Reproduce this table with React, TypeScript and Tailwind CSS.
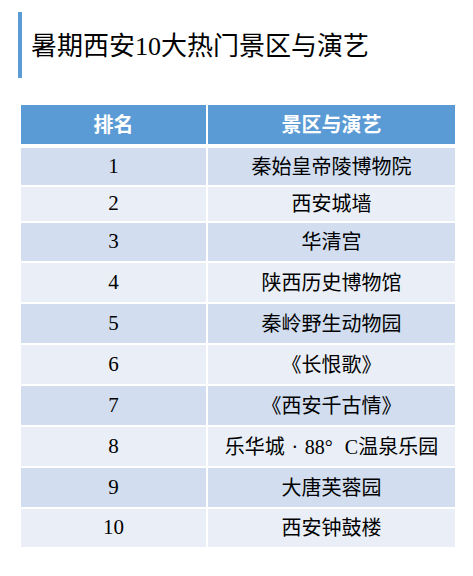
const ROWS: { rank: string; name: React.ReactNode; h: string }[] = [
  { rank: "1", name: "秦始皇帝陵博物院", h: "h-[37px]" },
  { rank: "2", name: "西安城墙", h: "h-[34px]" },
  { rank: "3", name: "华清宫", h: "h-[38px]" },
  { rank: "4", name: "陕西历史博物馆", h: "h-[39px]" },
  { rank: "5", name: "秦岭野生动物园", h: "h-[39px]" },
  { rank: "6", name: "《长恨歌》", h: "h-[39px]" },
  { rank: "7", name: "《西安千古情》", h: "h-[39px]" },
  {
    rank: "8",
    name: (
      <>
        乐华城<span className="inline-block w-[20px] text-center">·</span>88<span className="inline-block w-[20px] text-left">°</span>C温泉乐园
      </>
    ),
    h: "h-[39px]",
  },
  { rank: "9", name: "大唐芙蓉园", h: "h-[39px]" },
  { rank: "10", name: "西安钟鼓楼", h: "h-[38px]" },
];

const FONT = "font-['Liberation_Serif','Noto_Sans_CJK_SC',serif]";

export default function App() {
  return (
    <div className={`w-[473px] h-[576px] bg-white text-black ${FONT}`}>
      <div className="flex pt-[12px] pl-[18px]">
        <div className="w-[4px] h-[66px] bg-[#5b9bd5]" />
        <h1 className="ml-[9px] pt-[19px] text-[26px] leading-[32px] font-normal">暑期西安10大热门景区与演艺</h1>
      </div>

      <div className="ml-[21px] mt-[27px] w-[434px] flex flex-col">
        <div className="flex h-[39px] gap-[2px] text-white font-bold text-[20px]">
          <div className="w-[185px] flex items-center justify-center bg-[#5b9bd5]">排名</div>
          <div className="flex-1 flex items-center justify-center bg-[#5b9bd5]">景区与演艺</div>
        </div>
        <div className="mt-[4px] flex flex-col gap-[2px] text-[20px]">
          {ROWS.map((r, i) => (
            <div key={r.rank} className={`flex gap-[2px] ${r.h}`}>
              <div className={`w-[185px] flex items-center justify-center text-[21px] ${i % 2 === 0 ? "bg-[#d2deef]" : "bg-[#eaeff7]"}`}>{r.rank}</div>
              <div className={`flex-1 flex items-center justify-center whitespace-nowrap ${i % 2 === 0 ? "bg-[#d2deef]" : "bg-[#eaeff7]"}`}>{r.name}</div>
            </div>
          ))}
        </div>
      </div>
    </div>
  );
}
